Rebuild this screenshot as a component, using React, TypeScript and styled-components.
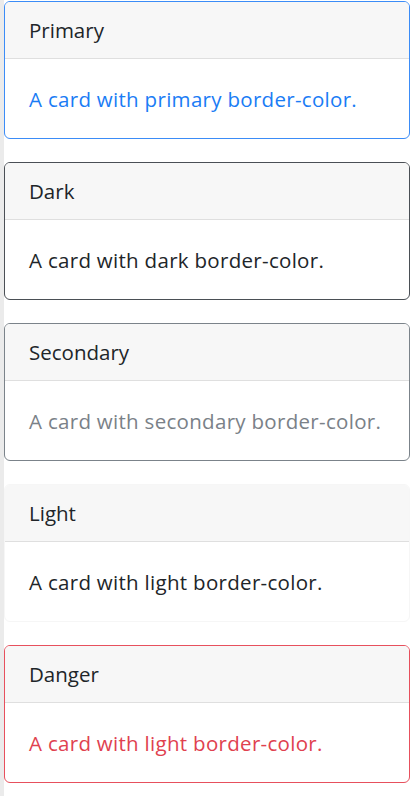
import styled, { createGlobalStyle } from "styled-components";

const GlobalStyle = createGlobalStyle`
  body {
    margin: 0;
    background: #fff;
    font-family: "Open Sans", "Noto Sans", sans-serif;
    color: #212529;
  }
`;

const Page = styled.div`
  display: flex;
  min-height: 796px;
`;

const Rail = styled.div`
  width: 4px;
  flex-shrink: 0;
  background: #ebebeb;
`;

const CardList = styled.div`
  flex: 1;
  display: flex;
  flex-direction: column;
  gap: 23px;
  padding: 1px 8px 0 0;
`;

const Card = styled.div<{ $border: string }>`
  border: 1px solid ${({ $border }) => $border};
  border-radius: 6px;
  overflow: hidden;
  background: #fff;
`;

const CardHeader = styled.div`
  background: #f7f7f7;
  border-bottom: 1px solid #dfdfdf;
  padding: 14px 24px 14px;
  font-size: 20.5px;
  line-height: 28px;
`;

const CardBody = styled.p<{ $color: string }>`
  margin: 0;
  padding: 26px 24px 25px;
  font-size: 20.5px;
  line-height: 28px;
  letter-spacing: 0.3px;
  color: ${({ $color }) => $color};
`;

const cards = [
  { title: "Primary", border: "#3b8cf7", color: "#1a7cf5", text: "A card with primary border-color." },
  { title: "Dark", border: "#4a4f55", color: "#212529", text: "A card with dark border-color." },
  { title: "Secondary", border: "#7b838a", color: "#7a8188", text: "A card with secondary border-color." },
  { title: "Light", border: "#f6f6f6", color: "#212529", text: "A card with light border-color." },
  { title: "Danger", border: "#e7505d", color: "#e0414f", text: "A card with light border-color." },
];

export default function App() {
  return (
    <>
      <GlobalStyle />
      <Page>
        <Rail />
        <CardList>
          {cards.map((c) => (
            <Card key={c.title} $border={c.border}>
              <CardHeader>{c.title}</CardHeader>
              <CardBody $color={c.color}>{c.text}</CardBody>
            </Card>
          ))}
        </CardList>
      </Page>
    </>
  );
}
